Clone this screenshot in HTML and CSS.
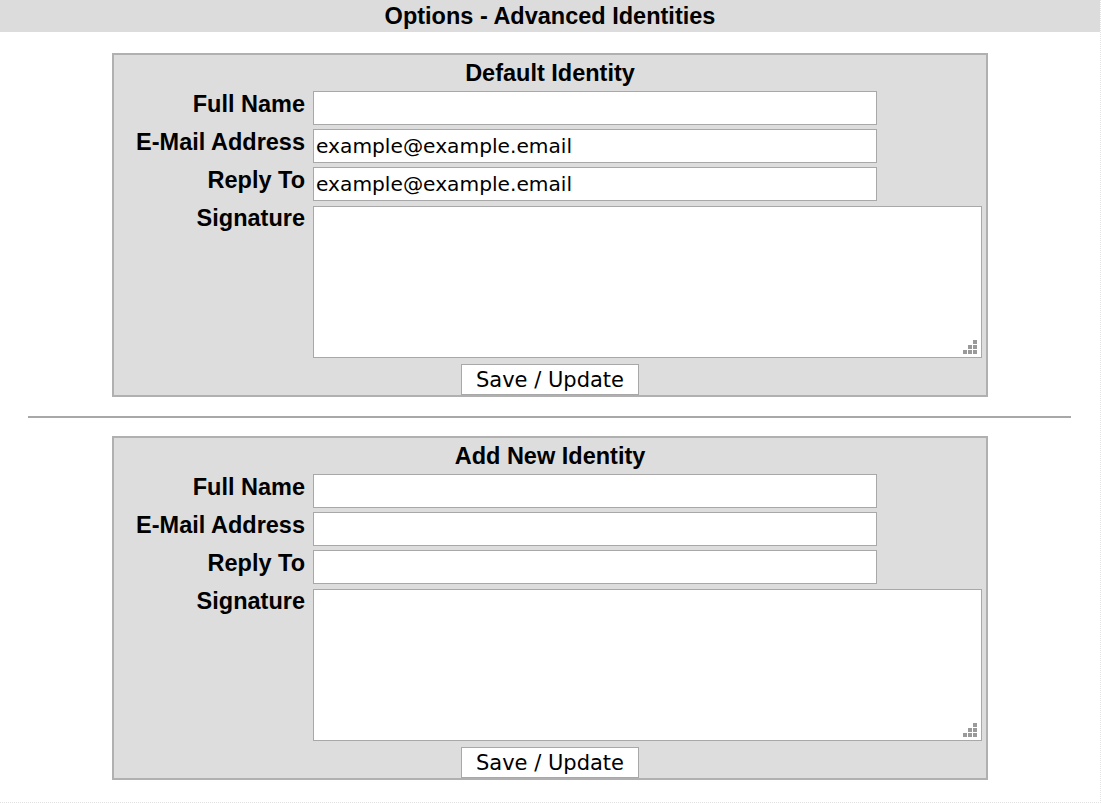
FILE: index.html
```html
<!DOCTYPE html>
<html lang="en">
<head>
    <meta charset="UTF-8">
    <meta name="viewport" content="width=device-width, initial-scale=1.0">
    <title>Options - Advanced Identities</title>
    <link rel="stylesheet" href="styles.css">
</head>
<body>
    <div class="page">
        <div class="page-title">Options - Advanced Identities</div>

        <form class="identity">
            <div class="identity-title">Default Identity</div>
            <div class="identity-grid">
                <label for="name-0">Full Name</label>
                <input id="name-0" class="field" type="text">
                <label for="email-0">E-Mail Address</label>
                <input id="email-0" class="field" type="text" value="example@example.email">
                <label for="reply-0">Reply To</label>
                <input id="reply-0" class="field" type="text" value="example@example.email">
                <label for="sig-0">Signature</label>
                <textarea id="sig-0" class="signature"></textarea>
            </div>
            <div class="actions">
                <button type="button" class="save-btn">Save / Update</button>
            </div>
        </form>

        <hr class="divider">

        <form class="identity">
            <div class="identity-title">Add New Identity</div>
            <div class="identity-grid">
                <label for="name-1">Full Name</label>
                <input id="name-1" class="field" type="text">
                <label for="email-1">E-Mail Address</label>
                <input id="email-1" class="field" type="text">
                <label for="reply-1">Reply To</label>
                <input id="reply-1" class="field" type="text">
                <label for="sig-1">Signature</label>
                <textarea id="sig-1" class="signature"></textarea>
            </div>
            <div class="actions">
                <button type="button" class="save-btn">Save / Update</button>
            </div>
        </form>
    </div>
</body>
</html>
```

FILE: styles.css
```css
body {
    margin: 0;
    background: white;
    color: black;
    font-family: 'Liberation Sans', Arial, sans-serif;
}
.page {
    width: 1100px;
    height: 782px;
    padding-bottom: 20px;
    border-right: 1px dotted #e2e2e2;
    border-bottom: 1px dotted #e2e2e2;
}
.page-title {
    height: 32px;
    line-height: 33px;
    background: #dcdcdc;
    text-align: center;
    font-size: 23.5px;
    font-weight: bold;
    margin-bottom: 21px;
}
.identity {
    width: 872px;
    margin: 0 auto;
    background: #dddddd;
    border: 2px solid #b0b0b0;
}
.identity-title {
    height: 36px;
    line-height: 36px;
    text-align: center;
    font-size: 23.5px;
    font-weight: bold;
}
.identity-grid {
    display: grid;
    grid-template-columns: 199px 1fr;
    row-gap: 4px;
    align-items: start;
}
.identity-grid label {
    text-align: right;
    padding-right: 8px;
    font-size: 23.5px;
    line-height: 26px;
    font-weight: bold;
}
.field {
    box-sizing: border-box;
    width: 564px;
    height: 34px;
    margin: 0;
    padding: 0 2px;
    border: 1px solid #a8a8a8;
    border-radius: 0;
    background: white;
    font-family: 'DejaVu Sans', Tahoma, sans-serif;
    font-size: 20.2px;
    color: black;
}
/* dotted grip in the corner, like the old windows one */
.signature {
    box-sizing: border-box;
    width: 669px;
    height: 152px;
    margin: 1px 0 0 0;
    padding: 2px;
    border: 1px solid #a8a8a8;
    border-radius: 0;
    resize: none;
    font-family: 'DejaVu Sans', Tahoma, sans-serif;
    font-size: 20px;
    background-color: white;
    background-image:
        linear-gradient(#9a9a9a, #9a9a9a),
        linear-gradient(#9a9a9a, #9a9a9a),
        linear-gradient(#9a9a9a, #9a9a9a),
        linear-gradient(#9a9a9a, #9a9a9a),
        linear-gradient(#9a9a9a, #9a9a9a),
        linear-gradient(#9a9a9a, #9a9a9a);
    background-size: 4px 4px;
    background-repeat: no-repeat;
    background-position:
        right 4px bottom 3px,
        right 9px bottom 3px,
        right 14px bottom 3px,
        right 4px bottom 8px,
        right 9px bottom 8px,
        right 4px bottom 13px;
}
.actions {
    display: flex;
    justify-content: center;
    padding-top: 6px;
}
.save-btn {
    box-sizing: border-box;
    width: 178px;
    height: 31px;
    margin: 0;
    padding: 0;
    border: 1px solid #a8a8a8;
    border-radius: 0;
    background: white;
    font-family: 'DejaVu Sans', Tahoma, sans-serif;
    font-size: 21px;
    color: black;
    cursor: pointer;
}
.divider {
    width: 1043px;
    height: 0;
    margin: 19px 0 18px 28px;
    border: 0;
    border-top: 2px solid #a8a8a8;
}
```
